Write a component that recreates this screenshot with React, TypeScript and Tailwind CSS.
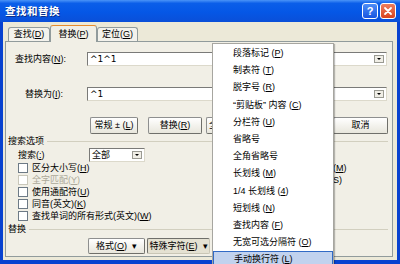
import React from "react";

const K = ({ c }: { c: string }) => (
  <span className="font-['Liberation_Sans',sans-serif]">
    (<span className="underline">{c}</span>)
  </span>
);

const Btn = ({
  className = "",
  children,
}: {
  className?: string;
  children?: React.ReactNode;
}) => (
  <div
    className={`h-full flex items-center justify-center rounded-[2px] border border-[#8e8f8f] border-b-[#6f6f6a] border-r-[#6f6f6a] bg-gradient-to-b from-[#ffffff] to-[#e8e6dc] whitespace-nowrap ${className}`}
  >
    {children}
  </div>
);

const Check = ({ label, disabled }: { label: React.ReactNode; disabled?: boolean }) => (
  <div className={`flex items-center gap-[4px] h-[12px] ${disabled ? "text-[#aca899]" : ""}`}>
    <div
      className={`w-[10px] h-[10px] border bg-white ${
        disabled ? "border-[#c9c7ba]" : "border-[#6d7a86]"
      }`}
    />
    <span className="whitespace-nowrap">{label}</span>
  </div>
);

const Arrow = () => (
  <div className="ml-auto mr-[2px] w-[10px] h-[8px] border border-[#9a9a92] bg-[#f0eee6] flex items-center justify-center">
    <div className="w-0 h-0 border-l-[2px] border-r-[2px] border-t-[2px] border-l-transparent border-r-transparent border-t-black" />
  </div>
);

const menu: [string, string | null][] = [
  ["段落标记", "P"],
  ["制表符", "T"],
  ["脱字号", "R"],
  ["“剪贴板” 内容", "C"],
  ["分栏符", "U"],
  ["省略号", null],
  ["全角省略号", null],
  ["长划线", "M"],
  ["1/4 长划线", "4"],
  ["短划线", "N"],
  ["查找内容", "F"],
  ["无宽可选分隔符", "O"],
  ["手动换行符", "L"],
];

export default function App() {
  return (
    <div className="w-[400px] h-[264px] relative overflow-hidden bg-[#0842d0] font-['Liberation_Sans','Noto_Sans_CJK_SC',sans-serif] text-[9px] text-black leading-none">
      {/* title bar */}
      <div className="h-[22px] flex items-center pl-[5px] pr-[4px] bg-[linear-gradient(180deg,#4a94f8_0%,#0b5ee9_15%,#0557e6_55%,#0a4fd8_100%)]">
        <span className="text-white font-bold text-[10.5px] tracking-[0.5px] [text-shadow:1px_1px_0_#0a2e8a]">
          查找和替换
        </span>
        <div className="ml-auto flex gap-[2px]">
          <div className="w-[16px] h-[16px] rounded-[3px] border border-white bg-gradient-to-b from-[#4d8df7] to-[#1955e0] flex items-center justify-center text-white font-bold text-[11px]">
            ?
          </div>
          <div className="w-[16px] h-[16px] rounded-[3px] border border-white bg-gradient-to-b from-[#ec7d5c] to-[#d8421d] flex items-center justify-center">
            <svg width="10" height="10" viewBox="0 0 10 10">
              <path d="M2 2 L8 8 M8 2 L2 8" stroke="white" strokeWidth="1.8" strokeLinecap="round" />
            </svg>
          </div>
        </div>
      </div>

      {/* body */}
      <div className="mx-[3px] h-[238px] bg-[#ece9d8] pt-[3px] px-[2px]">
        {/* tabs */}
        <div className="h-[16px] flex items-end pl-[3px]">
          <div className="w-[42px] h-[14px] border border-b-0 border-[#919b9c] rounded-t-[3px] bg-[#f3f2ec] flex items-center justify-center">
            查找<K c="D" />
          </div>
          <div className="w-[47px] h-[17px] -mb-px z-10 border border-b-0 border-[#919b9c] border-t-[#e68b2c] rounded-t-[3px] bg-[#f1efe6] flex items-center justify-center">
            替换<K c="P" />
          </div>
          <div className="w-[41px] h-[14px] border border-b-0 border-[#919b9c] rounded-t-[3px] bg-[#f3f2ec] flex items-center justify-center">
            定位<K c="G" />
          </div>
        </div>

        {/* panel */}
        <div className="w-[388px] h-[216px] border border-[#919b9c] bg-[#f1efe6] flex flex-col">
          {/* find */}
          <div className="mt-[10px] h-[14px] flex items-center pl-[9px]">
            <div className="w-[72px]">
              查找内容<K c="N" />:
            </div>
            <div className="w-[300px] h-full bg-white border border-t-[#7a7a78] border-l-[#7a7a78] border-b-[#dcd9cb] border-r-[#dcd9cb] flex items-center pl-[2px]">
              <span className="font-['DejaVu_Sans',sans-serif] text-[9px]">^1^1</span>
              <Arrow />
            </div>
          </div>

          {/* replace */}
          <div className="mt-[21px] h-[14px] flex items-center pl-[9px]">
            <div className="w-[72px] pl-[10px]">
              替换为<K c="I" />:
            </div>
            <div className="w-[300px] h-full bg-white border border-t-[#7a7a78] border-l-[#7a7a78] border-b-[#dcd9cb] border-r-[#dcd9cb] flex items-center pl-[2px]">
              <span className="font-['DejaVu_Sans',sans-serif] text-[9px]">^1</span>
              <Arrow />
            </div>
          </div>

          {/* buttons */}
          <div className="mt-[16px] h-[17px] flex pl-[84px]">
            <Btn className="w-[48px]">
              常规 ±&nbsp;<K c="L" />
            </Btn>
            <Btn className="w-[54px] ml-[10px]">
              替换<K c="R" />
            </Btn>
            <Btn className="w-[56px] ml-[4px] !justify-start pl-[2px]">
              <span>全</span>
            </Btn>
            <Btn className="w-[63px] ml-[4px]" />
            <Btn className="w-[55px] ml-[4px]">取消</Btn>
          </div>

          {/* search options */}
          <div className="mt-[2px] h-[11px] flex items-center pl-[2px] pr-[4px]">
            <span>搜索选项</span>
            <div className="flex-1 h-px bg-[#d2cfbf] ml-[3px]" />
          </div>
          <div className="mt-[1px] h-[14px] flex items-center pl-[12px]">
            <div className="w-[71px]">
              搜索<K c=":" />
            </div>
            <div className="w-[56px] h-full bg-white border border-t-[#7a7a78] border-l-[#7a7a78] border-b-[#dcd9cb] border-r-[#dcd9cb] flex items-center pl-[2px]">
              全部
              <Arrow />
            </div>
          </div>

          <div className="flex pl-[12px]">
            <div className="w-[315px] flex flex-col">
              <Check label={<>区分大小写<K c="H" /></>} />
              <Check disabled label={<>全字匹配<K c="Y" /></>} />
              <Check label={<>使用通配符<K c="U" /></>} />
              <Check label={<>同音(英文)<K c="K" /></>} />
              <Check label={<>查找单词的所有形式(英文)<K c="W" /></>} />
            </div>
            <div className="flex flex-col">
              <div className="h-[12px] flex items-center">
                <K c="M" />
              </div>
              <div className="h-[12px] flex items-center">
                <span className="font-['Liberation_Sans',sans-serif]">S)</span>
              </div>
            </div>
          </div>

          {/* replace section */}
          <div className="mt-[1px] h-[12px] flex items-center pl-[2px] pr-[4px]">
            <span>替换</span>
            <div className="flex-1 h-px bg-[#d2cfbf] ml-[3px]" />
          </div>
          <div className="mt-[3px] h-[16px] flex pl-[82px]">
            <Btn className="w-[57px]">
              格式<K c="O" />&nbsp;&nbsp;▾
            </Btn>
            <div className="w-[63px] ml-[2px] h-full flex items-center justify-center rounded-[2px] border border-[#6f6f6a] border-b-[#c9c6b6] border-r-[#c9c6b6] bg-[#e4e1d2] whitespace-nowrap">
              特殊字符<K c="E" />&nbsp;&nbsp;▾
            </div>
          </div>
        </div>
      </div>

      {/* popup menu */}
      <div className="absolute left-[212px] top-[43px] w-[122px] h-[230px] bg-white border border-[#a7a6a0] pt-[1px] shadow-[1px_1px_1px_rgba(0,0,0,0.25)]">
        {menu.map(([t, k], i) => (
          <div
            key={i}
            className={`h-[17.2px] flex items-center pl-[20px] whitespace-nowrap ${
              i === menu.length - 1 ? "bg-[#c1d2ee] border border-[#316ac5] pl-[19px]" : ""
            }`}
          >
            {t}
            {k && (
              <>
                &nbsp;
                <K c={k} />
              </>
            )}
          </div>
        ))}
      </div>
    </div>
  );
}
